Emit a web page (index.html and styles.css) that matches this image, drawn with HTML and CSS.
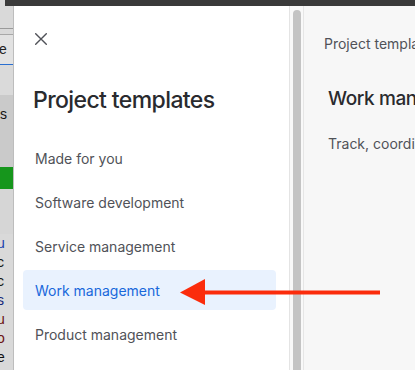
FILE: index.html
```html
<!DOCTYPE html>
<html>
<head>
<meta charset="utf-8">
<link rel="stylesheet" href="styles.css">
</head>
<body>
<div class="topbar"></div>
<div class="layout">
  <div class="backpage">
    <div class="bp-a"></div>
    <div class="bp-line"></div>
    <div class="bp-b"><span class="bp-e">e</span></div>
    <div class="bp-blue"></div>
    <div class="bp-c"></div>
    <div class="bp-d"><span class="bp-s">s</span></div>
    <div class="bp-green"></div>
    <div class="bp-e2"></div>
    <div class="bp-list">
      <span class="c-blue">u</span>
      <span>c</span>
      <span>c</span>
      <span class="c-navy">s</span>
      <span class="c-red">u</span>
      <span class="c-red">o</span>
      <span>e</span>
    </div>
  </div>
  <aside class="drawer">
    <button class="close" aria-label="Close">
      <svg width="12" height="12" viewBox="0 0 12 12"><path d="M0.7 0.7 L11.3 11.3 M11.3 0.7 L0.7 11.3" stroke="#505258" stroke-width="1.4" fill="none" stroke-linecap="round"/></svg>
    </button>
    <h1 class="title">Project templates</h1>
    <nav class="menu">
      <a class="item">Made for you</a>
      <a class="item">Software development</a>
      <a class="item">Service management</a>
      <a class="item active">Work management</a>
      <a class="item">Product management</a>
    </nav>
  </aside>
  <div class="scroll">
    <div class="thumb"></div>
  </div>
  <main class="content">
    <div class="crumb">Project templates</div>
    <h2 class="ctitle">Work management</h2>
    <p class="cdesc">Track, coordinate and manage work</p>
  </main>
</div>
<svg class="arrow" width="415" height="370" viewBox="0 0 415 370">
  <line x1="200" y1="292.5" x2="380" y2="292.5" stroke="#fb2c0c" stroke-width="4"/>
  <polygon points="180,292.5 205,279 205,305" fill="#fb2c0c"/>
</svg>
</body>
</html>
```
FILE: styles.css
```css
* { box-sizing: border-box; }
html, body { margin: 0; padding: 0; }
body {
  width: 415px;
  height: 370px;
  overflow: hidden;
  background: #d9d9d9;
  font-family: Inter, "Noto Sans", sans-serif;
  position: relative;
}
.topbar {
  height: 6px;
  margin-left: 5px;
  background: #3a3a3a;
}
.layout {
  display: flex;
  height: 364px;
  overflow: hidden;
}
.backpage {
  width: 14px;
  flex: none;
  display: flex;
  flex-direction: column;
  background: #d9d9d9;
  border-right: 1px solid #bdbdbd;
  overflow: hidden;
  font-family: "Liberation Sans", sans-serif;
  font-size: 14px;
}
.bp-a { height: 22px; flex: none; }
.bp-line { height: 7px; flex: none; border-top: 1px solid #9a9a9a; border-bottom: 1px solid #a8a8a8; }
.bp-b { height: 29px; flex: none; background: #e2e2e2; position: relative; }
.bp-e { position: absolute; left: -1px; top: 6px; color: #222; }
.bp-blue { height: 1px; flex: none; background: #2a6fd0; }
.bp-c { height: 30px; flex: none; background: #dadada; }
.bp-d { height: 72px; flex: none; background: #cacaca; position: relative; }
.bp-s { position: absolute; left: 0; top: 11px; color: #111; }
.bp-green { height: 22px; flex: none; background: #16961c; }
.bp-e2 { height: 45px; flex: none; background: #d6d6d6; }
.bp-list { display: flex; flex-direction: column; line-height: 19px; color: #111; }
.bp-list span { margin-left: -3px; }
.c-blue { color: #1a3fae; }
.c-navy { color: #13267a; }
.c-red { color: #6b1010; }

.drawer {
  width: 276px;
  flex: none;
  background: #fff;
  border-right: 1px solid #e4e4e4;
  padding: 0 13px 0 9px;
}
.close {
  display: block;
  border: 0;
  background: none;
  padding: 0;
  margin: 27px 0 0 12px;
  width: 12px;
  height: 12px;
}
.close svg { display: block; }
.title {
  margin: 41px 0 0 10px;
  font-size: 23px;
  line-height: 28px;
  font-weight: 500;
  color: #292a2e;
  letter-spacing: -0.6px;
}
.menu {
  display: flex;
  flex-direction: column;
  gap: 4px;
  margin-top: 24px;
}
.item {
  display: flex;
  align-items: center;
  height: 40px;
  padding-left: 12px;
  font-size: 14px;
  color: #505258;
  border-radius: 4px;
}
.item.active {
  background: #e9f2fe;
  color: #1868db;
}
.scroll {
  width: 14px;
  flex: none;
  background: #f9f9f9;
  border-right: 1px solid #e6e6e6;
  padding: 4px 0 0 3px;
}
.thumb {
  width: 8px;
  height: 400px;
  background: #c4c4c4;
  border-radius: 4px 4px 0 0;
}
.content {
  flex: 1;
  background: #f7f7f7;
  padding: 28px 0 0 20px;
  white-space: nowrap;
  overflow: hidden;
}
.crumb {
  font-size: 14px;
  line-height: 20px;
  color: #505258;
}
.ctitle {
  margin: 33px 0 0 4px;
  font-size: 19px;
  line-height: 24px;
  font-weight: 500;
  letter-spacing: -0.4px;
  color: #292a2e;
}
.cdesc {
  margin: 23px 0 0 4px;
  font-size: 14px;
  line-height: 20px;
  color: #505258;
}
.arrow {
  position: absolute;
  left: 0;
  top: 0;
  pointer-events: none;
}
```
